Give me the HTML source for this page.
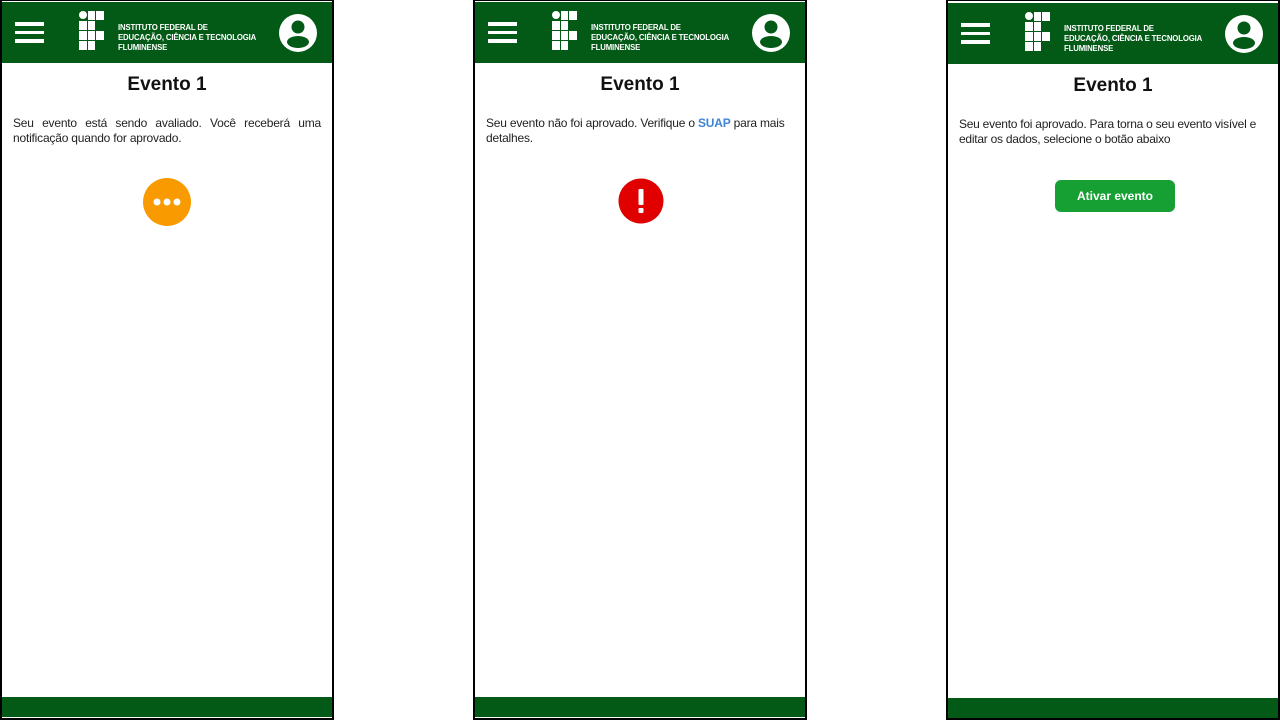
<!DOCTYPE html>
<html><head><meta charset="utf-8"><style>
*{margin:0;padding:0;box-sizing:border-box}
body{width:1280px;height:720px;background:#fff;position:relative;overflow:hidden;font-family:"Liberation Sans",Roboto,sans-serif}
.p{position:absolute;top:0;width:334px;height:720px;border:2px solid #000;border-top:1px solid #000;background:#fff}
.h{position:absolute;left:0;right:0;top:1px;height:61px;background:#035a16}
.f{position:absolute;left:0;right:0;bottom:1px;height:20px;background:#035a16}
.menu{position:absolute;left:13px;top:20px;width:29px}
.menu i{display:block;height:3.5px;background:#fff;margin-bottom:5px}
.logo{position:absolute;left:77px;top:9px;width:25px;height:40px}
.logo b{position:absolute;width:7.5px;height:9px;background:#fff}
.lt{position:absolute;left:116px;top:21px;color:#fff;font-size:7.8px;font-weight:bold;line-height:10px;letter-spacing:-0.15px}
.av{position:absolute;right:15px;top:12px}
h1{position:absolute;left:0;right:0;top:73px;text-align:center;font-size:19px;font-weight:bold;color:#111}
.t{position:absolute;left:11px;right:11px;top:115px;font-size:12px;letter-spacing:-0.2px;line-height:15px;color:#222}
</style></head><body>

<div class="p" style="left:0">
<div class="h"><div class="menu"><i></i><i></i><i></i></div>
<div class="logo"><b style="left:0;top:0;border-radius:50%;width:8px;height:8px"></b><b style="left:8.5px;top:0"></b><b style="left:17px;top:0"></b><b style="left:0;top:10px"></b><b style="left:8.5px;top:10px"></b><b style="left:0;top:20px"></b><b style="left:8.5px;top:20px"></b><b style="left:17px;top:20px"></b><b style="left:0;top:30px"></b><b style="left:8.5px;top:30px"></b></div>
<div class="lt">INSTITUTO FEDERAL DE<br>EDUCAÇÃO, CIÊNCIA E TECNOLOGIA<br>FLUMINENSE</div>
<svg class="av" width="38" height="38" viewBox="0 0 38 38"><circle cx="19" cy="19" r="19" fill="#fff"/><circle cx="19" cy="13" r="6.5" fill="#035a16"/><ellipse cx="19" cy="28" rx="11" ry="6" fill="#035a16"/></svg></div>
<h1>Evento 1</h1>
<div class="t" style="text-align:justify">Seu evento está sendo avaliado. Você receberá uma notificação quando for aprovado.</div>
<svg style="position:absolute;left:141px;top:177px" width="48" height="48"><circle cx="24" cy="24" r="24" fill="#f89a00"/><circle cx="14" cy="24" r="3.5" fill="#fff"/><circle cx="24" cy="24" r="3.5" fill="#fff"/><circle cx="34" cy="24" r="3.5" fill="#fff"/></svg>
<div class="f"></div></div>

<div class="p" style="left:473px">
<div class="h"><div class="menu"><i></i><i></i><i></i></div>
<div class="logo"><b style="left:0;top:0;border-radius:50%;width:8px;height:8px"></b><b style="left:8.5px;top:0"></b><b style="left:17px;top:0"></b><b style="left:0;top:10px"></b><b style="left:8.5px;top:10px"></b><b style="left:0;top:20px"></b><b style="left:8.5px;top:20px"></b><b style="left:17px;top:20px"></b><b style="left:0;top:30px"></b><b style="left:8.5px;top:30px"></b></div>
<div class="lt">INSTITUTO FEDERAL DE<br>EDUCAÇÃO, CIÊNCIA E TECNOLOGIA<br>FLUMINENSE</div>
<svg class="av" width="38" height="38" viewBox="0 0 38 38"><circle cx="19" cy="19" r="19" fill="#fff"/><circle cx="19" cy="13" r="6.5" fill="#035a16"/><ellipse cx="19" cy="28" rx="11" ry="6" fill="#035a16"/></svg></div>
<h1>Evento 1</h1>
<div class="t">Seu evento não foi aprovado. Verifique o <b style="color:#3d85d6">SUAP</b> para mais detalhes.</div>
<svg style="position:absolute;left:143px;top:177px" width="46" height="46"><circle cx="23" cy="23" r="22.5" fill="#e00000"/><rect x="20.5" y="11" width="5" height="16" rx="1" fill="#fff"/><rect x="20.5" y="30" width="5" height="5" rx="1" fill="#fff"/></svg>
<div class="f"></div></div>

<div class="p" style="left:946px;width:334px">
<div class="h" style="top:2px"><div class="menu"><i></i><i></i><i></i></div>
<div class="logo"><b style="left:0;top:0;border-radius:50%;width:8px;height:8px"></b><b style="left:8.5px;top:0"></b><b style="left:17px;top:0"></b><b style="left:0;top:10px"></b><b style="left:8.5px;top:10px"></b><b style="left:0;top:20px"></b><b style="left:8.5px;top:20px"></b><b style="left:17px;top:20px"></b><b style="left:0;top:30px"></b><b style="left:8.5px;top:30px"></b></div>
<div class="lt">INSTITUTO FEDERAL DE<br>EDUCAÇÃO, CIÊNCIA E TECNOLOGIA<br>FLUMINENSE</div>
<svg class="av" width="38" height="38" viewBox="0 0 38 38"><circle cx="19" cy="19" r="19" fill="#fff"/><circle cx="19" cy="13" r="6.5" fill="#035a16"/><ellipse cx="19" cy="28" rx="11" ry="6" fill="#035a16"/></svg></div>
<h1 style="top:74px">Evento 1</h1>
<div class="t" style="top:116px;right:4px;letter-spacing:-0.25px">Seu evento foi aprovado. Para torna o seu evento visível e editar os dados, selecione o botão abaixo</div>
<div style="position:absolute;left:107px;top:179px;width:120px;height:32px;background:#16a034;border-radius:6px;color:#fff;font-weight:bold;font-size:12px;text-align:center;line-height:32px">Ativar evento</div>
<div class="f" style="bottom:0"></div></div>
</body></html>
